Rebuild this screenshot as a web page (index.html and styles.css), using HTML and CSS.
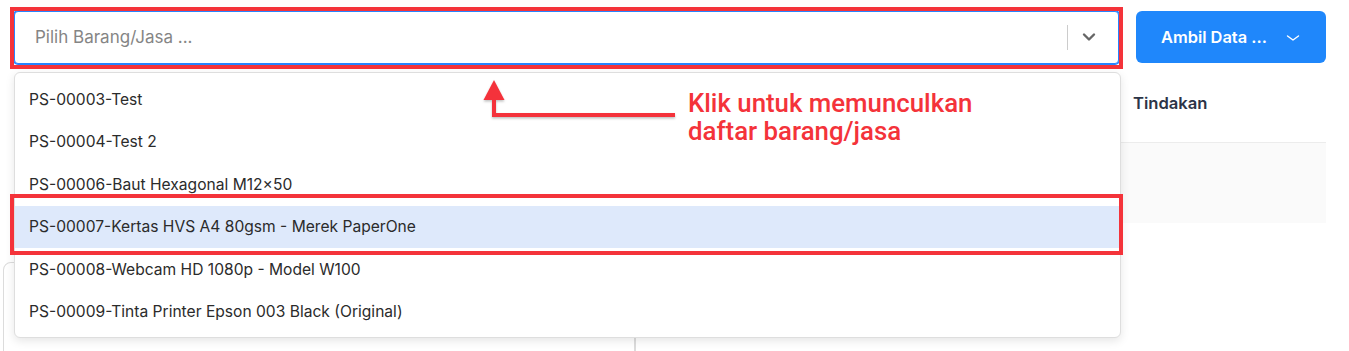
FILE: index.html
```html
<!DOCTYPE html>
<html lang="id">
<head>
<meta charset="utf-8">
<title>Pilih Barang/Jasa</title>
<link rel="stylesheet" href="styles.css">
</head>
<body>
<div class="page">
  <div class="toolbar">
    <div class="select">
      <span class="placeholder">Pilih Barang/Jasa ...</span>
      <span class="sep"></span>
      <svg class="caret" width="14" height="10" viewBox="0 0 14 10"><path d="M2 2.5 L7 7.5 L12 2.5" fill="none" stroke="#666" stroke-width="2.4" stroke-linecap="round" stroke-linejoin="round"/></svg>
    </div>
    <button class="btn">Ambil Data ...<svg class="btn-caret" width="14" height="8" viewBox="0 0 14 8"><path d="M1.5 2 L7 6 L12.5 2" fill="none" stroke="#fff" stroke-width="1.4" stroke-linecap="round" stroke-linejoin="round"/></svg></button>
  </div>

  <div class="table">
    <div class="thead">
      <div class="th-main"></div>
      <div class="th-action">Tindakan</div>
    </div>
    <div class="trow"></div>
  </div>

  <div class="lower">
    <div class="card-left"></div>
    <div class="card-right"></div>
  </div>

  <ul class="menu">
    <li class="item">PS-00003-Test</li>
    <li class="item">PS-00004-Test 2</li>
    <li class="item">PS-00006-Baut Hexagonal M12×50</li>
    <li class="item active">PS-00007-Kertas HVS A4 80gsm - Merek PaperOne</li>
    <li class="item">PS-00008-Webcam HD 1080p - Model W100</li>
    <li class="item">PS-00009-Tinta Printer Epson 003 Black (Original)</li>
  </ul>

  <div class="mark mark-select"></div>
  <div class="mark mark-item"></div>

  <svg class="arrow" width="200" height="44" viewBox="0 0 200 44">
    <defs>
      <filter id="sh" x="-10%" y="-30%" width="120%" height="160%">
        <feDropShadow dx="0" dy="1.5" stdDeviation="1.2" flood-color="#000" flood-opacity="0.25"/>
      </filter>
    </defs>
    <g filter="url(#sh)" fill="#f4333a">
      <polygon points="13,2 2.5,22 23.5,22"/>
      <rect x="11" y="21" width="4" height="18"/>
      <rect x="11" y="35" width="183" height="4"/>
    </g>
  </svg>
  <div class="note">Klik untuk memunculkan<br>daftar barang/jasa</div>
</div>
</body>
</html>
```

FILE: styles.css
```css
* { box-sizing: border-box; }
html, body { margin: 0; padding: 0; background: #fff; }
body {
  font-family: Inter, "Noto Sans", "Liberation Sans", sans-serif;
  color: #333;
  width: 1349px;
  height: 351px;
  overflow: hidden;
}
.page {
  position: relative;
  padding: 11px 23px 0 14px;
}
.toolbar {
  display: flex;
  gap: 17px;
  align-items: flex-start;
}
.select {
  flex: 1;
  height: 53px;
  border: 1px solid #2684ff;
  box-shadow: 0 0 0 1px #2684ff;
  border-radius: 4px;
  background: #fff;
  display: flex;
  align-items: center;
  padding: 0 22px 1px 20px;
}
.placeholder {
  flex: 1;
  font-size: 17px;
  color: #858585;
}
.sep {
  width: 1px;
  height: 25px;
  background: #ccc;
  margin-right: 14px;
}
.caret { display: block; }
.btn {
  width: 190px;
  height: 52px;
  border: 0;
  border-radius: 6px;
  background: #1f87fb;
  color: #fff;
  font-family: inherit;
  font-size: 16.4px;
  font-weight: 600;
  display: flex;
  align-items: center;
  padding: 0 0 0 25px;
  gap: 19px;
}
.btn-caret { display: block; margin-top: 1px; }

.table { margin-top: 8px; }
.thead {
  display: flex;
  height: 71px;
  border-bottom: 1px solid #ececec;
}
.th-main { flex: 1; }
.th-action {
  width: 193px;
  font-size: 16.6px;
  font-weight: 600;
  color: #2c3447;
  padding-top: 21px;
}
.trow {
  height: 80px;
  background: #fafafa;
}
.lower {
  display: flex;
  margin-top: 39px;
  margin-left: -11px;
  height: 100px;
}
.card-left {
  width: 633px;
  border: 1px solid #dcdcdc;
  border-radius: 8px 0 0 0;
  border-right: 2px solid #dcdcdc;
}
.card-right { flex: 1; }

.menu {
  position: absolute;
  left: 14px;
  top: 72px;
  width: 1107px;
  height: 266px;
  margin: 0;
  padding: 5px 0 0 0;
  list-style: none;
  background: #fff;
  border: 1px solid #dedede;
  border-radius: 6px;
  box-shadow: 0 3px 10px rgba(0, 0, 0, 0.10);
}
.item {
  height: 42.5px;
  display: flex;
  align-items: center;
  padding: 0 14px;
  font-size: 15.6px;
  color: #2b2b2b;
}
.item.active { background: #dee9fb; }

.mark {
  position: absolute;
  border: 4px solid #f4333a;
}
.mark-select { left: 10px; top: 7px; width: 1113px; height: 62px; }
.mark-item { left: 10px; top: 194px; width: 1113px; height: 61px; }

.arrow {
  position: absolute;
  left: 481px;
  top: 78px;
}
.note {
  position: absolute;
  left: 688px;
  top: 89px;
  font-family: Roboto, "Noto Sans", sans-serif;
  font-size: 25.8px;
  line-height: 28px;
  font-weight: 500;
  color: #f4333a;
}
```
